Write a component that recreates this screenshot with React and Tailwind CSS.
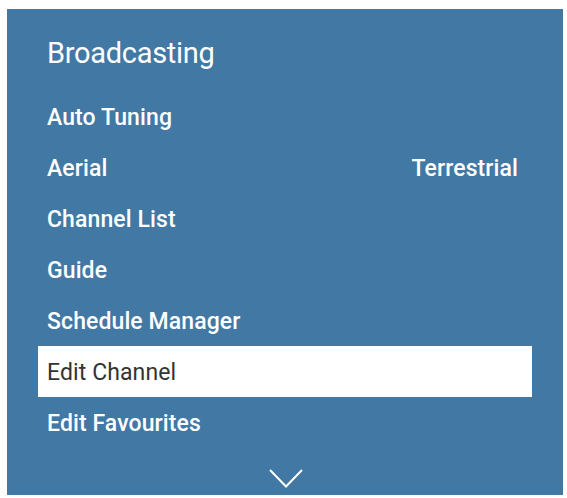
import React from "react";

const ITEMS = [
  { id: "auto", label: "Auto Tuning" },
  { id: "aerial", label: "Aerial", value: "Terrestrial" },
  { id: "list", label: "Channel List" },
  { id: "guide", label: "Guide" },
  { id: "schedule", label: "Schedule Manager" },
  { id: "edit", label: "Edit Channel", active: true },
  { id: "fav", label: "Edit Favourites" },
];

const MenuRow = ({ item }) => (
  <div
    className={`h-[51px] flex items-center justify-between pl-[9px] pr-[14px] pt-[3px] text-[23px] tracking-[0.1px] ${
      item.active ? "bg-white text-[#333333] font-normal" : "text-white font-medium"
    }`}
  >
    <span>{item.label}</span>
    {item.value && <span>{item.value}</span>}
  </div>
);

const App = () => {
  return (
    <div
      className="w-[567px] h-[498px] bg-white pt-[9px] pl-[7px]"
      style={{ fontFamily: "Roboto, 'Liberation Sans', sans-serif" }}
    >
      <div className="w-[556px] h-[486px] bg-[#4178a4] px-[31px] flex flex-col">
        <div className="h-[82px] pl-[9px] pt-[24px] text-[29px] leading-[40px] text-white tracking-[-0.3px]">
          Broadcasting
        </div>
        <div className="flex flex-col">
          {ITEMS.map((it) => (
            <MenuRow key={it.id} item={it} />
          ))}
        </div>
        <div className="flex justify-center pt-[21px] pl-[1px]">
          <svg width="34" height="19" viewBox="0 0 34 19" fill="none">
            <path d="M1 1 L17 17.5 L33 1" stroke="white" strokeWidth="2" />
          </svg>
        </div>
      </div>
    </div>
  );
};

export default App;
